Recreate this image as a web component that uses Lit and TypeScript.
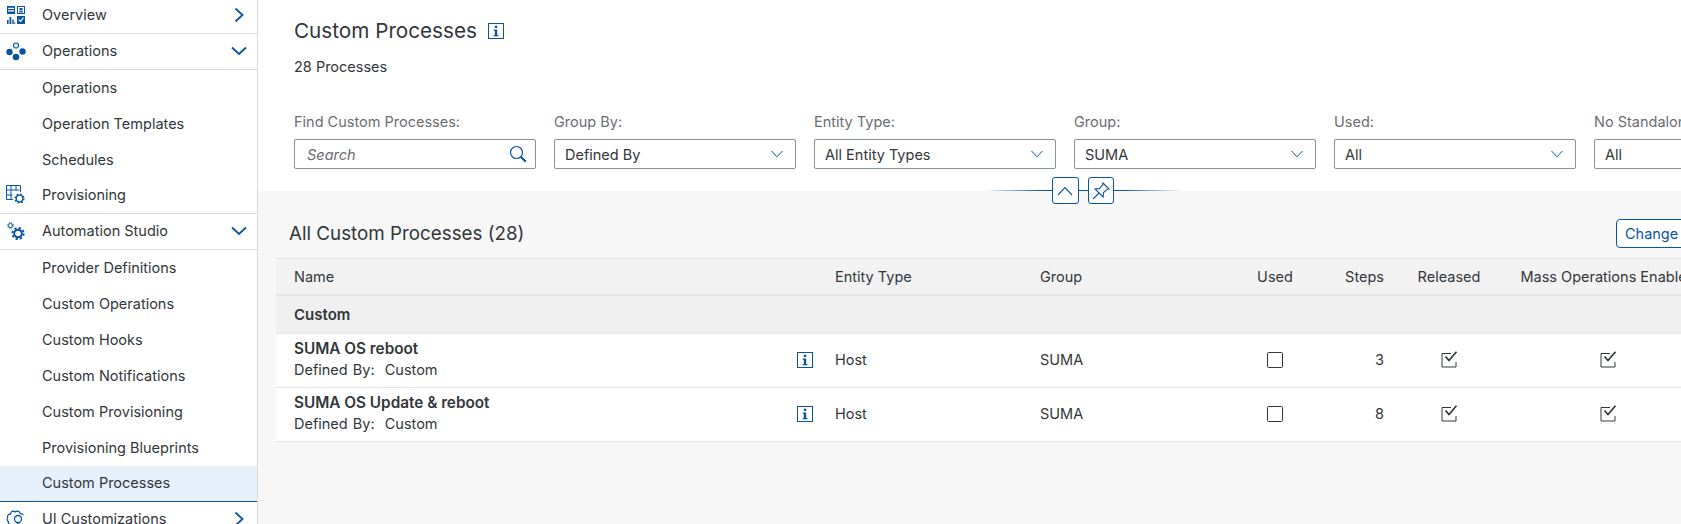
import { LitElement, html, css, svg } from "lit";
import { customElement } from "lit/decorators.js";

const chevronRight = html`<svg class="chev" width="16" height="16" viewBox="0 0 16 16"><path d="M4.500 1.500 11.500 8l-7 6.500" fill="none" stroke="currentColor" stroke-width="1.800"/></svg>`;
const chevronDown = html`<svg class="chev" width="16" height="16" viewBox="0 0 16 16"><path d="M1 4.500 8 11l7-6.500" fill="none" stroke="currentColor" stroke-width="1.800"/></svg>`;
const selectArrow = html`<svg width="12" height="8" viewBox="0 0 12 8"><path d="M.5 1 6 6.800 11.500 1" fill="none" stroke="#0854a0" stroke-width="1"/></svg>`;

// toothed wheel: a ring plus a dashed ring on the outside for the teeth
const gear = (cx: number, cy: number, r: number, w: number) => {
  const tr = r + w * 0.9;
  return svg`
  <circle cx=${cx} cy=${cy} r=${r} fill="none" stroke="currentColor" stroke-width=${w}/>
  <circle cx=${cx} cy=${cy} r=${tr} fill="none" stroke="currentColor" stroke-width=${w}
    stroke-dasharray=${(2 * Math.PI * tr) / 16} />`;
};

const icons: Record<string, unknown> = {
  overview: html`<svg width="20" height="20" viewBox="0 0 20 20" fill="currentColor">
    <path d="M1 1h8v8H1zM2 2.800v1.200h6V2.800zM2 5.300v1.200h6V5.300z" fill-rule="evenodd"/>
    <path d="M11 1h8v8h-8zM12 2v6h6V2zM13.500 3h3v2.500h-3zM13 6.200h4V7.500h-4z" fill-rule="evenodd"/>
    <path d="M1 15h1.600v4H1zM3.500 12h1.800v7H3.500zM6.300 14.500h1.400V19H6.300zM8.300 17h.9v2h-.9z"/>
    <path d="M11 11h8v8h-8zM12.400 15l2.200 2.300 3.400-4.300-.9-.7-2.600 3.300-1.300-1.300z" fill-rule="evenodd"/>
  </svg>`,
  operations: html`<svg width="20" height="20" viewBox="0 0 20 20" fill="currentColor">
    <circle cx="3.500" cy="11" r="3.200"/><circle cx="16.500" cy="10.500" r="3.200"/><circle cx="10" cy="16" r="3.300"/>
    <circle cx="10" cy="4.500" r="2.500" fill="none" stroke="currentColor" stroke-width="1.200"/>
  </svg>`,
  provisioning: html`<svg width="20" height="20" viewBox="0 0 20 20">
    <path d="M.5.500h14v6.500M.5.500v14h6.500M5 .5v14M10 .5v5M.5 5h13M.5 10h6" fill="none" stroke="currentColor" stroke-width="1"/>
    ${gear(13.500, 13.500, 3.300, 1.300)}
  </svg>`,
  studio: html`<svg width="20" height="20" viewBox="0 0 20 20">
    ${gear(4.500, 4.500, 2, 1)} ${gear(12, 12.500, 3.800, 2)}
  </svg>`,
  ui: html`<svg width="20" height="20" viewBox="0 0 20 20">
    <path d="M3.500 15c-1-.5-1.500-1.500-1-2.500-1.200-.5-1.800-2-1-3.500.3-.8-.3-2 .5-3 .7-1 1.800-.8 2.500-.8 0-1.500 1.200-3 2.700-3 .8 0 1.500.3 2 .8.6-.5 1.300-.8 2-.8 1.500 0 2.700 1.200 3 2.500 1 0 2.500.3 3.200 1.500" fill="none" stroke="currentColor" stroke-width="1.200"/>
    <circle cx="12" cy="10" r="3.500" fill="none" stroke="currentColor" stroke-width="1.300"/>
    <path d="M6.500 19c1-3 3-4 5.500-4s4.500 1 5.500 4" fill="none" stroke="currentColor" stroke-width="1.300"/>
  </svg>`,
};

const info = html`<svg class="info" width="16" height="16" viewBox="0 0 16 16">
  <rect x=".5" y=".5" width="15" height="15" fill="none" stroke="#0854a0"/>
  <path d="M6.800 2.800h2.400v2.200H6.800zM5.700 6.500h3.500v5.500h1.200v1.300H5.700V12h1.100V7.800H5.700z" fill="#0854a0"/>
</svg>`;

const check = html`<svg width="17" height="17" viewBox="0 0 17 17">
  <path d="M10 2.500H1v13.500h14v-5" fill="none" stroke="#32363a" stroke-width="1"/>
  <path d="M4.500 5.500 8 9.500 15.500 .8" fill="none" stroke="#32363a" stroke-width="1.700"/>
</svg>`;

const box = html`<svg width="16" height="16" viewBox="0 0 16 16"><rect x=".5" y=".5" width="15" height="15" rx="1" fill="none" stroke="#32363a"/></svg>`;

type NavItem = { label: string; icon?: string; chev?: "down" | "right"; active?: boolean };

const nav: NavItem[] = [
  { label: "Overview", icon: "overview", chev: "right" },
  { label: "Operations", icon: "operations", chev: "down" },
  { label: "Operations" },
  { label: "Operation Templates" },
  { label: "Schedules" },
  { label: "Provisioning", icon: "provisioning" },
  { label: "Automation Studio", icon: "studio", chev: "down" },
  { label: "Provider Definitions" },
  { label: "Custom Operations" },
  { label: "Custom Hooks" },
  { label: "Custom Notifications" },
  { label: "Custom Provisioning" },
  { label: "Provisioning Blueprints" },
  { label: "Custom Processes", active: true },
  { label: "UI Customizations", icon: "ui", chev: "right" },
];

const filters = [
  { label: "Group By:", value: "Defined By" },
  { label: "Entity Type:", value: "All Entity Types" },
  { label: "Group:", value: "SUMA" },
  { label: "Used:", value: "All" },
  { label: "No Standalone Operation:", value: "All" },
];

const rows = [
  { name: "SUMA OS reboot", steps: 3 },
  { name: "SUMA OS Update & reboot", steps: 8 },
];

@customElement("app-root")
export class AppRoot extends LitElement {
  static styles = css`
    :host {
      display: flex;
      width: 1681px;
      height: 524px;
      overflow: hidden;
      background: #f7f7f7;
      font-family: "Inter", sans-serif;
      font-size: 14.500px;
      color: #32363a;
    }

    /* side navigation */
    .side {
      flex: 0 0 257px;
      margin-top: -2px;
      background: #fff;
      border-right: 1px solid #d9d9d9;
    }
    .nav {
      display: flex;
      align-items: center;
      height: 36px;
      box-sizing: border-box;
      padding: 0 10px 2px 42px;
    }
    .nav.top {
      padding-left: 6px;
      gap: 16px;
      border-bottom: 1px solid #d9d9d9;
      color: #0854a0;
    }
    .nav.top span { color: #32363a; flex: 1; }
    .nav.active {
      background: #e5f0fa;
      border-bottom: 1px solid #0854a0;
    }
    .chev { flex: none; }

    /* main column, wider than the window and cut off by the host */
    .main {
      flex: 0 0 1650px;
      position: relative;
    }
    .head {
      background: #fff;
      height: 191px;
      box-sizing: border-box;
      padding: 16px 0 0 36px;
    }
    h1 {
      margin: 0;
      height: 28px;
      display: flex;
      align-items: center;
      gap: 11px;
      font-size: 20.700px;
      font-weight: 400;
    }
    .count { margin-top: 13px; line-height: 20px; }
    .filters {
      display: flex;
      gap: 18px;
      margin-top: 35px;
    }
    .field { flex: 0 0 242px; }
    .field label {
      display: block;
      color: #6a6d70;
      line-height: 20px;
      margin-bottom: 7px;
      white-space: nowrap;
    }
    .input {
      height: 30px;
      box-sizing: border-box;
      border: 1px solid #89919a;
      border-radius: 2px;
      background: #fff;
      display: flex;
      align-items: center;
      justify-content: space-between;
      padding: 0 12px 0 10px;
    }
    .input.search { padding: 0 8px 0 12px; }
    .input.search em { color: #6a6d70; }

    .toggle {
      position: absolute;
      top: 177px;
      left: 0;
      right: 0;
      height: 27px;
      display: flex;
      justify-content: center;
      align-items: center;
      gap: 9px;
    }
    .toggle::before {
      content: "";
      position: absolute;
      left: calc(50% - 99px);
      width: 198px;
      top: 13px;
      height: 1px;
      background: linear-gradient(90deg, transparent, #0854a0 30%, #0854a0 70%, transparent);
    }
    .toggle button {
      position: relative;
      width: 26.500px;
      height: 27px;
      padding: 0;
      display: flex;
      align-items: center;
      justify-content: center;
      background: #fff;
      border: 1px solid #0854a0;
      border-radius: 3px;
    }

    /* table */
    .bar {
      height: 67px;
      box-sizing: border-box;
      display: flex;
      align-items: center;
      padding: 17px 92px 0 31px;
    }
    .bar h2 {
      margin: 0;
      font-size: 18.800px;
      font-weight: 400;
    }
    .change {
      font: inherit;
      color: #0854a0;
      width: 200px;
      height: 29px;
      margin-left: auto;
      text-align: left;
      padding-left: 8px;
      background: #fff;
      border: 1px solid #0854a0;
      border-radius: 4px;
    }
    .table { margin-left: 18px; }
    .row {
      display: grid;
      grid-template-columns: 559px 205px 190px 90px 64px 130px 188px 1fr;
      align-items: center;
      box-sizing: border-box;
      white-space: nowrap;
    }
    .row > .c { text-align: center; justify-self: center; display: flex; justify-content: center; }
    .row > .r { text-align: right; }
    .row.th {
      height: 38px;
      background: #f2f2f2;
      border-top: 1px solid #e4e4e4;
      border-bottom: 2px solid #e4e4e4;
    }
    .row.th > :first-child { padding-left: 18px; }
    .grp {
      height: 38px;
      box-sizing: border-box;
      padding-left: 18px;
      display: flex;
      align-items: center;
      background: #efefef;
      border-bottom: 1px solid #e4e4e4;
      font-weight: 600;
      font-size: 15px;
    }
    .row.td {
      height: 54px;
      background: #fff;
      padding-bottom: 2px;
      border-bottom: 1px solid #e4e4e4;
    }
    .name {
      display: flex;
      align-items: center;
      justify-content: space-between;
      padding: 0 22px 0 18px;
    }
    .name b { display: block; font-weight: 600; font-size: 15.300px; line-height: 20px; }
    .name small { display: block; font-size: 14.500px; line-height: 20px; margin-top: 1px; word-spacing: 1px; }
    .name .info { flex: none; margin-top: 1px; }
    h1 .info { flex: none; margin-top: 2px; }
  `;

  renderNav(n: NavItem) {
    const top = !!n.icon;
    return html`<div class="nav ${top ? "top" : ""} ${n.active ? "active" : ""}">
      ${top ? icons[n.icon!] : ""}
      <span>${n.label}</span>
      ${n.chev === "down" ? chevronDown : n.chev === "right" ? chevronRight : ""}
    </div>`;
  }

  render() {
    return html`
      <aside class="side">${nav.map((n) => this.renderNav(n))}</aside>
      <section class="main">
        <div class="head">
          <h1>Custom Processes ${info}</h1>
          <div class="count">28 Processes</div>
          <div class="filters">
            <div class="field">
              <label>Find Custom Processes:</label>
              <div class="input search">
                <em>Search</em>
                <svg width="18" height="18" viewBox="0 0 18 18"><circle cx="7.500" cy="7.500" r="6" fill="none" stroke="#0854a0" stroke-width="1.200"/><path d="m11.800 11.800 5 5" stroke="#0854a0" stroke-width="2"/></svg>
              </div>
            </div>
            ${filters.map((f) => html`<div class="field">
              <label>${f.label}</label>
              <div class="input"><span>${f.value}</span>${selectArrow}</div>
            </div>`)}
          </div>
        </div>
        <div class="toggle">
          <button><svg width="16" height="10" viewBox="0 0 16 10"><path d="M1 9 8 1.500 15 9" fill="none" stroke="#0854a0" stroke-width="1.100"/></svg></button>
          <button><svg width="18" height="18" viewBox="0 0 18 18"><path d="M11 1 17 7l-1.800.4-3.700 3.200-.4 4.400L3 7l4.400-.4L10.600 2.800zM7 11l-6 6" fill="none" stroke="#0854a0" stroke-width="1.100"/></svg></button>
        </div>
        <div class="bar">
          <h2>All Custom Processes (28)</h2>
          <button class="change">Change</button>
        </div>
        <div class="table">
          <div class="row th">
            <div>Name</div><div>Entity Type</div><div>Group</div>
            <div class="c">Used</div><div class="r">Steps</div><div class="c">Released</div><div class="c">Mass Operations Enabled</div>
          </div>
          <div class="grp">Custom</div>
          ${rows.map((r) => html`<div class="row td">
            <div class="name">
              <div><b>${r.name}</b><small>Defined By:&nbsp; Custom</small></div>
              ${info}
            </div>
            <div>Host</div><div>SUMA</div>
            <div class="c">${box}</div><div class="r">${r.steps}</div><div class="c">${check}</div><div class="c">${check}</div>
          </div>`)}
        </div>
      </section>
    `;
  }
}
